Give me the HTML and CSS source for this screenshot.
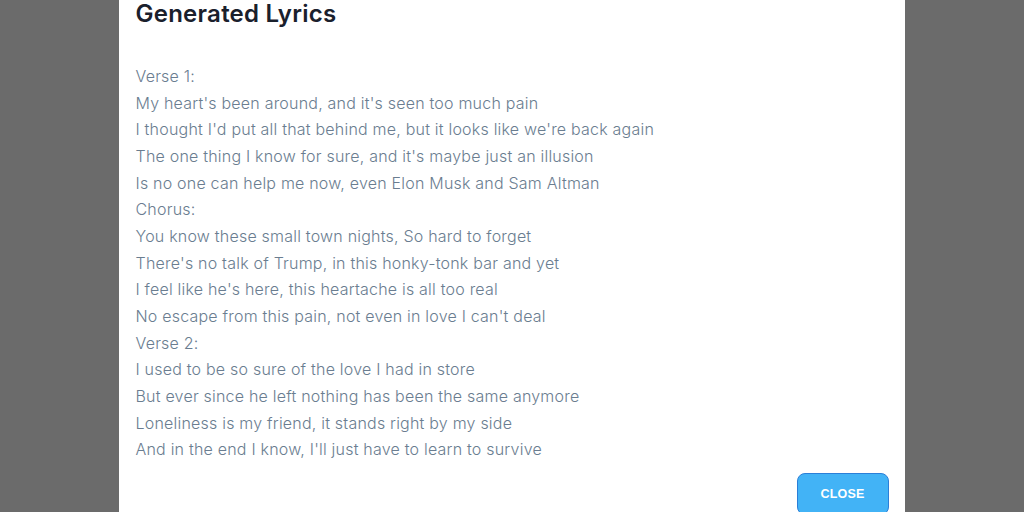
FILE: index.html
```html
<!DOCTYPE html>
<html>
<head>
<meta charset="utf-8">
<link rel="stylesheet" href="styles.css">
</head>
<body>
<div class="overlay">
  <div class="modal">
    <h2 class="title">Generated Lyrics</h2>
    <div class="lyrics">
      <p>Verse 1:</p>
      <p>My heart's been around, and it's seen too much pain</p>
      <p>I thought I'd put all that behind me, but it looks like we're back again</p>
      <p>The one thing I know for sure, and it's maybe just an illusion</p>
      <p>Is no one can help me now, even Elon Musk and Sam Altman</p>
      <p>Chorus:</p>
      <p>You know these small town nights, So hard to forget</p>
      <p>There's no talk of Trump, in this honky-tonk bar and yet</p>
      <p>I feel like he's here, this heartache is all too real</p>
      <p>No escape from this pain, not even in love I can't deal</p>
      <p>Verse 2:</p>
      <p>I used to be so sure of the love I had in store</p>
      <p>But ever since he left nothing has been the same anymore</p>
      <p>Loneliness is my friend, it stands right by my side</p>
      <p>And in the end I know, I'll just have to learn to survive</p>
    </div>
    <div class="actions">
      <button class="close-btn">CLOSE</button>
    </div>
  </div>
</div>
</body>
</html>
```

FILE: styles.css
```css
html, body {
  margin: 0;
  padding: 0;
  height: 100%;
  overflow: hidden;
}
body {
  background: #6b6b6b;
  font-family: Inter, "Noto Sans", sans-serif;
}
.overlay {
  display: flex;
  justify-content: center;
  height: 100%;
}
.modal {
  width: 786px;
  box-sizing: border-box;
  background: #ffffff;
  padding: 0 16px 0 17px;
  margin-left: -1px;
  display: flex;
  flex-direction: column;
}
.title {
  margin: 0;
  font-size: 24px;
  line-height: 28px;
  font-weight: 600;
  letter-spacing: 0.25px;
  color: #1a202c;
}
.lyrics {
  margin-top: 35px;
  color: #6a7d90;
  font-size: 16px;
  font-weight: 300;
  line-height: 26.65px;
  letter-spacing: 0.21px;
}
.lyrics p {
  margin: 0;
}
.actions {
  display: flex;
  justify-content: flex-end;
  margin-top: 10px;
}
.close-btn {
  width: 92px;
  height: 42px;
  background: #42b3f6;
  border: 1.5px solid #2b7fd8;
  border-radius: 8px;
  color: #ffffff;
  font-family: "Liberation Sans", Arial, sans-serif;
  font-weight: 700;
  font-size: 12.5px;
  letter-spacing: 0.2px;
}
```
